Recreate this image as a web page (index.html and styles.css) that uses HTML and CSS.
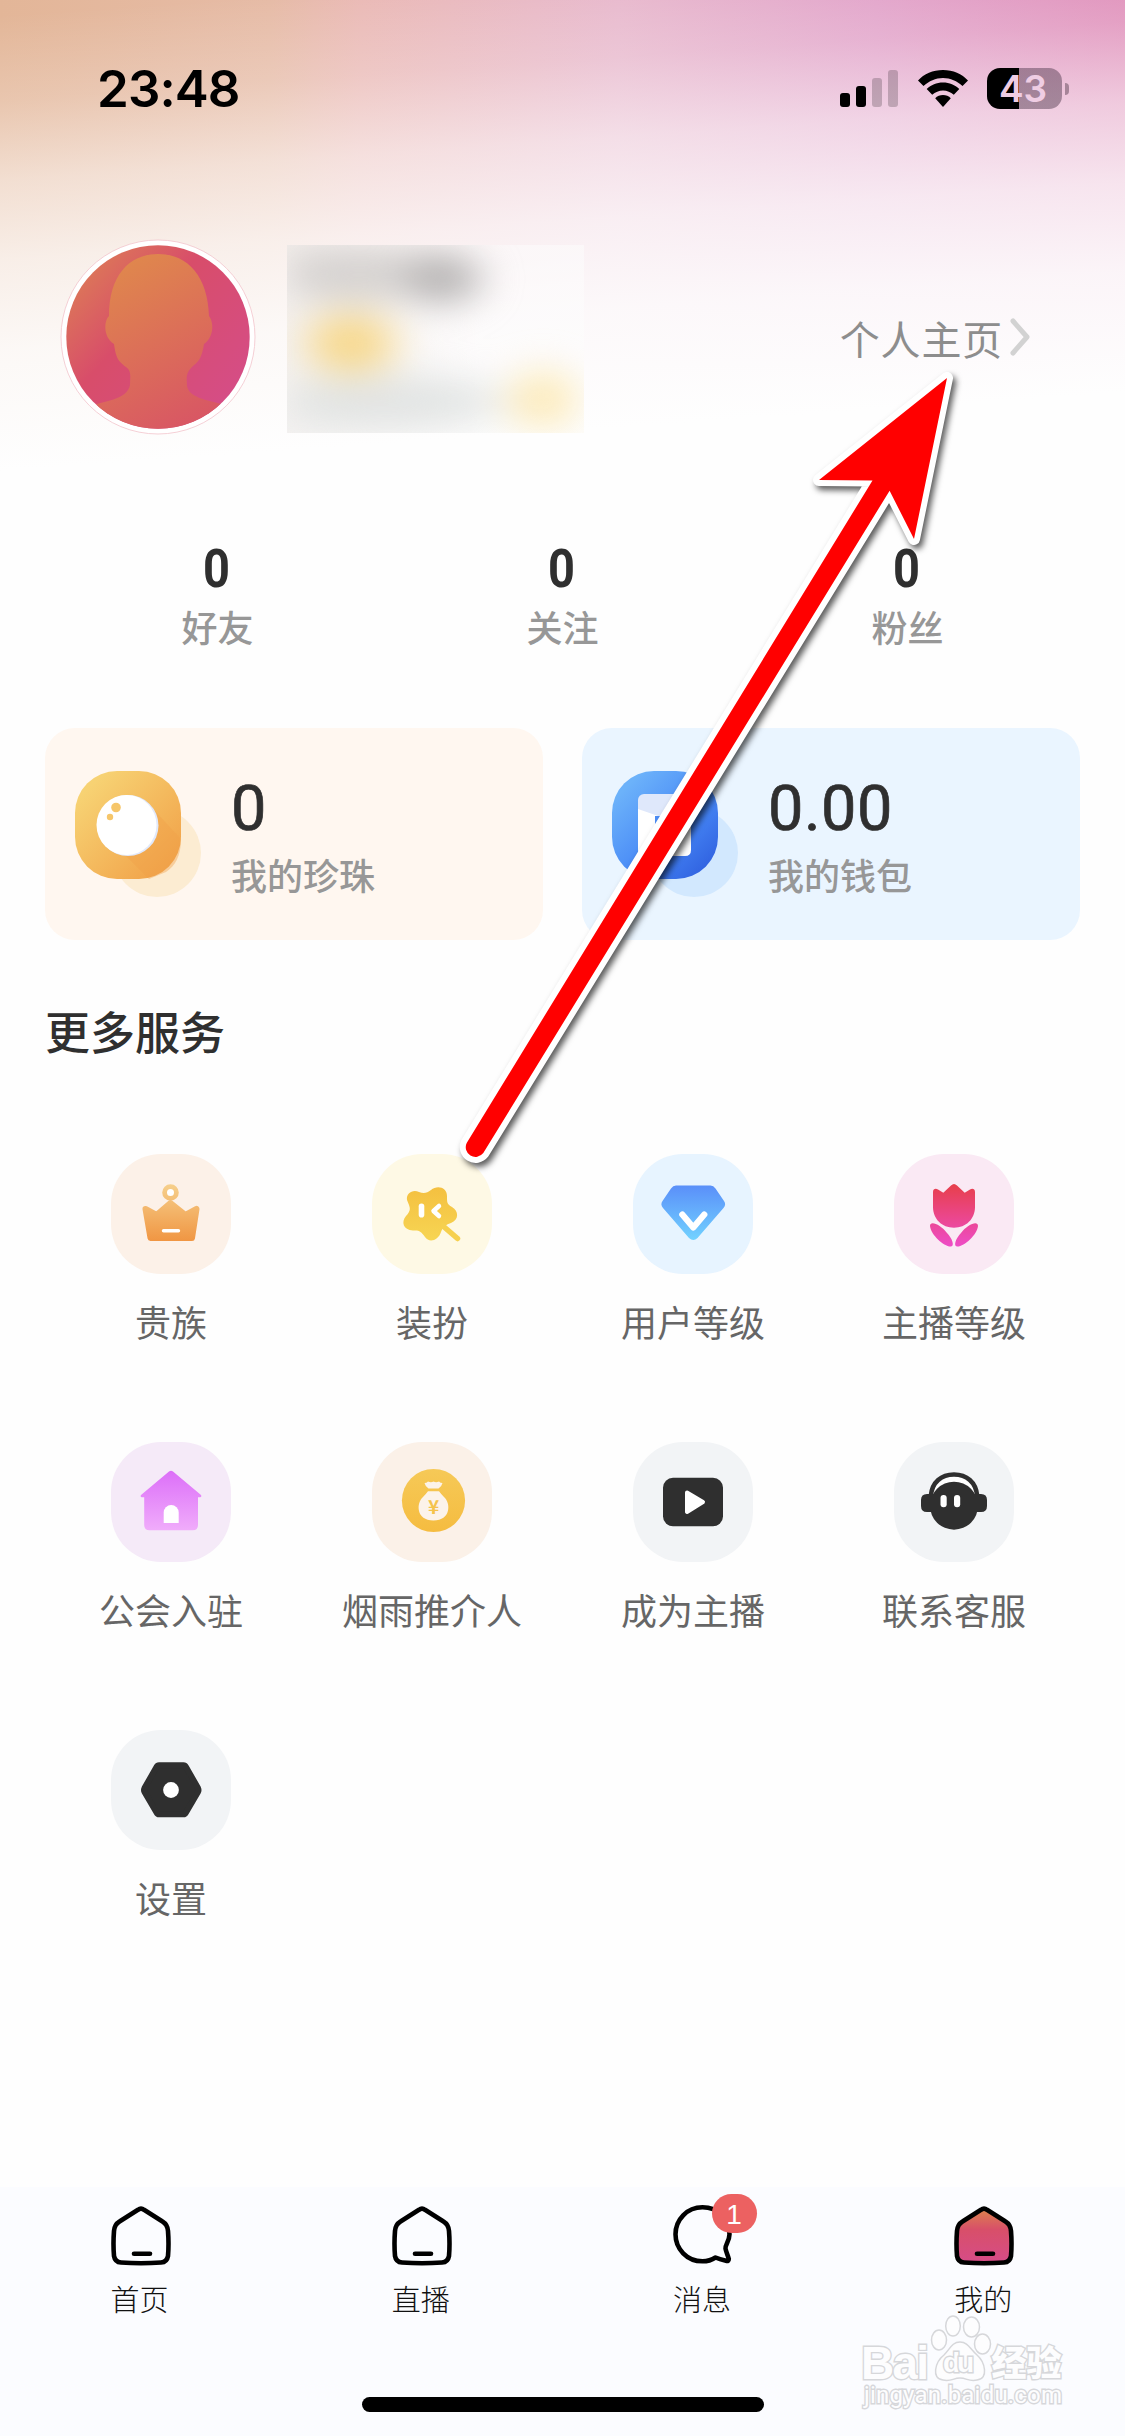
FILE: index.html
```html
<!DOCTYPE html>
<html lang="zh-CN">
<head>
<meta charset="utf-8">
<title>我的</title>
<link rel="stylesheet" href="styles.css">
</head>
<body>
<div class="page">
  <header class="status">
    <span class="time">23:48</span>
    <div class="indicators">
      <svg class="signal" width="58" height="37" viewBox="0 0 58 37">
        <rect x="0" y="23" width="10" height="14" rx="3"/>
        <rect x="16" y="16" width="10" height="21" rx="3"/>
        <rect x="32" y="8" width="10" height="29" rx="3" opacity=".2"/>
        <rect x="48" y="0" width="10" height="37" rx="3" opacity=".2"/>
      </svg>
      <svg class="wifi" width="50" height="37" viewBox="0 0 50 37">
        <path d="M25 0C35 0 44 4 50 10.500L44.500 16C39 11 32.500 8 25 8S11 11 5.500 16L0 10.500C6 4 15 0 25 0Z"/>
        <path d="M25 12.500C31.500 12.500 37 15 41.300 19L35.800 24.800C32.800 22.200 29 20.500 25 20.500S17.200 22.200 14.200 24.800L8.700 19C13 15 18.500 12.500 25 12.500Z"/>
        <path d="M25 25C28 25 30.800 26.200 32.800 28.200L25 37L17.200 28.200C19.200 26.200 22 25 25 25Z"/>
      </svg>
      <div class="battery"><span>43</span></div>
      <i class="nub"></i>
    </div>
  </header>

  <section class="profile">
    <svg class="avatar" width="196" height="196" viewBox="0 0 196 196">
      <defs>
        <linearGradient id="av" x1="0" y1="0.100" x2="0.900" y2="0.900">
          <stop offset="0.080" stop-color="#dc7758"/><stop offset="0.420" stop-color="#d84d6a"/><stop offset="1" stop-color="#d54d88"/>
        </linearGradient>
        <linearGradient id="hd" x1="0.200" y1="0" x2="0.700" y2="1">
          <stop offset="0" stop-color="#e08b4b"/><stop offset="1" stop-color="#d85465"/>
        </linearGradient>
        <clipPath id="ac"><circle cx="98" cy="98" r="91.700"/></clipPath>
      </defs>
      <circle cx="98" cy="98" r="97" fill="#fff" stroke="#f3c4cb" stroke-width=".8"/>
      <circle cx="98" cy="98" r="91.700" fill="url(#av)"/>
      <path clip-path="url(#ac)" fill="url(#hd)" d="M98 15C129 15 148 39 149 77C154 83 154 98 144 105C141 123 137 123 131 129C125 135 127 141 127 147C129 158 145 161 162 165L180 196H16L37 165C52 161 68 158 70 146C70 139 72 132 66 128C58 122 56 119 54 105C44 99 43 83 49 77C49 38 68 15 98 15Z"/>
    </svg>
    <div class="censored"></div>
    <a class="home-link">个人主页
      <svg width="22" height="38" viewBox="0 0 22 38"><path d="M4 3L18 19L4 35" fill="none" stroke="#d2d2d2" stroke-width="5" stroke-linecap="round" stroke-linejoin="round"/></svg>
    </a>
  </section>

  <section class="stats">
    <div class="stat"><b>0</b><span>好友</span></div>
    <div class="stat"><b>0</b><span>关注</span></div>
    <div class="stat"><b>0</b><span>粉丝</span></div>
  </section>

  <section class="cards">
    <div class="card pearl">
      <svg width="128" height="128" viewBox="0 0 128 128">
        <defs><linearGradient id="pg" x1="0.100" y1="0.100" x2="0.900" y2="0.900">
          <stop offset="0.050" stop-color="#f7d273"/><stop offset="1" stop-color="#f1a249"/></linearGradient></defs>
        <circle cx="82" cy="82" r="44" fill="#fcecd2"/>
        <rect width="106" height="108" rx="42" fill="url(#pg)"/>
        <path d="M80 40L106 68C106 85 100 95 91 101L74 108L50 84Z" fill="#f1a149" opacity=".4"/>
        <circle cx="53" cy="54.500" r="30.500" fill="#e1e9fb"/>
        <circle cx="51.500" cy="54" r="30" fill="#fff"/>
        <circle cx="41" cy="36.500" r="4.800" fill="#f6c66a"/>
        <circle cx="35" cy="46" r="3.200" fill="#f6c66a"/>
      </svg>
      <div><b>0</b><span>我的珍珠</span></div>
    </div>
    <div class="card wallet">
      <svg width="128" height="128" viewBox="0 0 128 128">
        <defs><linearGradient id="wg" x1="0.100" y1="0.100" x2="0.900" y2="0.900">
          <stop offset="0.050" stop-color="#6cb2fa"/><stop offset="0.600" stop-color="#4788f6"/><stop offset="1" stop-color="#3163e1"/></linearGradient></defs>
        <circle cx="82" cy="82" r="44" fill="#d2e8fe"/>
        <rect width="106" height="108" rx="42" fill="url(#wg)"/>
        <rect x="26" y="23" width="53" height="40" rx="6" fill="#dfe8fb"/>
        <path d="M26 38L52 47H73Q79 47 79 53V79Q79 85 73 85H32Q26 85 26 79Z" fill="#fff"/>
        <rect x="43" y="45" width="5" height="15" fill="#4c8df6"/>
      </svg>
      <div><b>0.00</b><span>我的钱包</span></div>
    </div>
  </section>

  <h2>更多服务</h2>

  <section class="services">
    <div class="service">
      <svg class="peach" viewBox="0 0 120 120">
        <defs><linearGradient id="cr" gradientUnits="userSpaceOnUse" x1="0" y1="30" x2="0" y2="87"><stop offset="0" stop-color="#f6d08c"/><stop offset="1" stop-color="#f09643"/></linearGradient></defs>
        <circle cx="59.500" cy="38.500" r="5.900" fill="#fff" stroke="url(#cr)" stroke-width="4.800"/>
        <path fill="url(#cr)" stroke="url(#cr)" stroke-width="6" stroke-linejoin="round" d="M34.500 55L45.500 61L59.500 49L74.500 61L85.500 55L81 84H39.500Z"/>
        <path d="M52.500 76.700H67.500" stroke="#fff" stroke-width="3.400" stroke-linecap="round"/>
      </svg><span>贵族</span>
    </div>
    <div class="service">
      <svg class="cream" viewBox="0 0 120 120">
        <defs><linearGradient id="fl" x1="0" y1="0" x2="0" y2="1"><stop offset="0" stop-color="#f4c040"/><stop offset="1" stop-color="#f7d553"/></linearGradient></defs>
        <path fill="url(#fl)" d="M35 46C34 39 41 35 47 38C52 40 55 39 59 36C65 31 75 33 75 42C75 49 75 50 80 53C87 57 87 66 79 69C73 71 71 73 69 78C66 87 57 89 53 83C49 77 47 76 41 76.500C31 76 29 68 34 62C39 57 38 54 37 51Z"/>
        <path d="M71 72L85.500 84.500" stroke="#f6d04e" stroke-width="5.500" stroke-linecap="round"/>
        <rect x="46.700" y="49.500" width="5.600" height="14" rx="2.800" fill="#fff"/>
        <path d="M67 52L61.500 57L67 62" fill="none" stroke="#fff" stroke-width="4.500" stroke-linecap="round" stroke-linejoin="round"/>
      </svg><span>装扮</span>
    </div>
    <div class="service">
      <svg class="sky" viewBox="0 0 120 120">
        <defs><linearGradient id="dm" x1="0" y1="0" x2="0" y2="1"><stop offset="0" stop-color="#5a8ff9"/><stop offset="1" stop-color="#72d2ff"/></linearGradient></defs>
        <path fill="url(#dm)" d="M43 31.500H77.500Q80.500 31.500 82.500 34.500L91 47Q93.500 50.500 90.500 54L64.500 84Q60.300 88 56 84L30 54Q27 50.500 29.500 47L38 34.500Q40 31.500 43 31.500Z"/>
        <path d="M49.300 60.500L60.300 73.500L71.300 60.500" fill="none" stroke="#fff" stroke-width="6.200" stroke-linecap="round" stroke-linejoin="round"/>
      </svg><span>用户等级</span>
    </div>
    <div class="service">
      <svg class="pink" viewBox="0 0 120 120">
        <defs><linearGradient id="tu" gradientUnits="userSpaceOnUse" x1="0" y1="30" x2="0" y2="93"><stop offset="0" stop-color="#e73f4a"/><stop offset="1" stop-color="#ee4dc8"/></linearGradient></defs>
        <path fill="url(#tu)" d="M39 38C39 35 41.500 34 44 35.500L49.300 38.800L57 31.500Q60 28.500 63 31.500L70.700 38.800L76 35.500C78.500 34 81 35 81 38V53C81 65 72 73.700 60 73.700S39 65 39 53Z"/>
        <path fill="url(#tu)" d="M36 72C36 66 47 71 53 79C58 84 61 92 57 92.500C50 93 37 81 36 72ZM84 72C84 66 73 71 67 79C62 84 59 92 63 92.500C70 93 83 81 84 72Z"/>
      </svg><span>主播等级</span>
    </div>
    <div class="service">
      <svg class="lilac" viewBox="0 0 120 120">
        <defs><linearGradient id="ho" x1="0" y1="0" x2="0" y2="1"><stop offset="0" stop-color="#dc6ff8"/><stop offset="1" stop-color="#f0acfb"/></linearGradient></defs>
        <path fill="url(#ho)" d="M58 29.500Q60 28 62 29.500L90 53Q91 55 89 55.300H87V83Q87 88.300 81.700 88.300H38.500Q33.200 88.300 33.200 83V55.300H31Q29 55 30 53Z"/>
        <path d="M52.700 81V70.500A7.500 7.500 0 0 1 67.700 70.500V81Z" fill="#fff"/>
      </svg><span>公会入驻</span>
    </div>
    <div class="service">
      <svg class="sand" viewBox="0 0 120 120">
        <defs><linearGradient id="mo" x1="0" y1="0" x2="0" y2="1"><stop offset="0" stop-color="#f6c957"/><stop offset="1" stop-color="#f5bc40"/></linearGradient></defs>
        <circle cx="61.500" cy="58.500" r="31.600" fill="url(#mo)"/>
        <path fill="#fcf3ea" d="M52.500 41Q54.500 41 56 39.500Q59 41 61.500 39.500Q64 41 67 39.500Q68.500 41 70.500 41Q69.500 45 66.500 46.500H56.500Q53.500 45 52.500 41ZM56 49.300H67Q69 52 72 55C79 61 79 78.500 61.500 78.500S44 61 51 55Q54 52 56 49.300Z"/>
        <text x="61.500" y="71.500" text-anchor="middle" class="yen">¥</text>
      </svg><span>烟雨推介人</span>
    </div>
    <div class="service">
      <svg class="grey" viewBox="0 0 120 120">
        <rect x="30" y="35.700" width="60" height="48.600" rx="10" fill="#2f2f2f"/>
        <path d="M54 50.500L70 60L54 70Z" fill="#fff" stroke="#fff" stroke-width="4" stroke-linejoin="round"/>
      </svg><span>成为主播</span>
    </div>
    <div class="service">
      <svg class="grey" viewBox="0 0 120 120">
        <path d="M36 56C37 41 47 33 60 33S83 41 84 56Z" fill="#fff"/>
        <circle cx="60" cy="63.700" r="24" fill="#2f2f2f"/>
        <path d="M36.800 54C38 40 47.500 32.500 60 32.500S82 40 83.200 54" fill="none" stroke="#2f2f2f" stroke-width="4.600"/>
        <path fill="#2f2f2f" d="M33 52H40V70H33Q27 70 27 64V58Q27 52 33 52ZM80 52H87Q93 52 93 58V64Q93 70 87 70H80Z"/>
        <rect x="46.500" y="53" width="6.200" height="12.300" rx="3" fill="#fff"/><rect x="60" y="53" width="6.200" height="12.300" rx="3" fill="#fff"/>
      </svg><span>联系客服</span>
    </div>
    <div class="service">
      <svg class="grey" viewBox="0 0 120 120">
        <path d="M48 35.300H72.500Q74 35.300 75 37L87 58Q88 60 87 62L75 82.500Q74 84.300 72.500 84.300H48Q46.500 84.300 45.500 82.500L33.500 62Q32.500 60 33.500 58L45.500 37Q46.500 35.300 48 35.300Z" fill="#2f2f2f" stroke="#2f2f2f" stroke-width="6" stroke-linejoin="round"/>
        <circle cx="60" cy="60" r="7.900" fill="#fff"/>
      </svg><span>设置</span>
    </div>
  </section>

  <nav class="tabs">
    <div class="tab">
      <svg width="60" height="60" viewBox="0 0 60 60"><path class="line" d="M27 3.800Q30 1.500 33 3.800L51.500 15.500Q56.500 18.500 57 25Q58 38 57 50Q56 56 50 56.500Q30 58 10 56.500Q4 56 3 50Q2 38 3 25Q3.500 18.500 8.500 15.500Z"/><path class="line" d="M23 47.700H39"/></svg>
      <span>首页</span>
    </div>
    <div class="tab">
      <svg width="60" height="60" viewBox="0 0 60 60"><path class="line" d="M27 3.800Q30 1.500 33 3.800L51.500 15.500Q56.500 18.500 57 25Q58 38 57 50Q56 56 50 56.500Q30 58 10 56.500Q4 56 3 50Q2 38 3 25Q3.500 18.500 8.500 15.500Z"/><path class="line" d="M23 47.700H39"/></svg>
      <span>直播</span>
    </div>
    <div class="tab">
      <svg class="bubble" width="60" height="60" viewBox="0 0 60 60"><path class="line" d="M42.500 51.500C38 54.500 34 55.300 29.500 55.300C14 55.300 2.500 43 2.500 28.300S14 1.300 29.500 1.300S56.500 13 56.500 28.300C56.500 35 52 39 52.500 42.500C53 46 55 49.500 55.800 53Q55.800 55.500 53 54.800C49 53.800 46 53 42.500 51.500Z"/></svg>
      <em class="badge">1</em>
      <span>消息</span>
    </div>
    <div class="tab">
      <svg width="60" height="60" viewBox="0 0 60 60">
        <defs><linearGradient id="me" x1="0" y1="0" x2="0" y2="1"><stop offset="0.050" stop-color="#dc7d50"/><stop offset="0.380" stop-color="#d84f69"/><stop offset="1" stop-color="#d64c88"/></linearGradient></defs>
        <path class="line filled" d="M27 3.800Q30 1.500 33 3.800L51.500 15.500Q56.500 18.500 57 25Q58 38 57 50Q56 56 50 56.500Q30 58 10 56.500Q4 56 3 50Q2 38 3 25Q3.500 18.500 8.500 15.500Z"/><path class="line" d="M23 47.700H39"/></svg>
      <span>我的</span>
    </div>
  </nav>
  <footer class="home-bar"></footer>

  <svg class="watermark" width="215" height="105" viewBox="0 0 215 105">
    <g class="mark">
      <ellipse cx="98" cy="21" rx="7.300" ry="10"/><ellipse cx="116.500" cy="22" rx="8" ry="10"/>
      <ellipse cx="84" cy="35" rx="7.500" ry="10"/><ellipse cx="127.500" cy="39" rx="8" ry="10"/>
      <path d="M105 37C113 37 115 44 122 50C130 57 134 74 122 75C114 77 112 73 105 73S96 77 88 75C76 74 80 57 89 50C95 44 97 37 105 37Z"/>
      <text x="6" y="74" class="bai" textLength="68">Bai</text>
      <text x="88" y="67" class="du" textLength="31">du</text>
      <text x="136.500" y="71" class="cn">经验</text>
      <text x="9" y="98" class="url" textLength="198">jingyan.baidu.com</text>
    </g>
  </svg>

  <svg class="arrow" width="1125" height="1250" viewBox="0 0 1125 1250">
    <path d="M947 378L819 480L872.500 480.500L466.700 1142.900A9.800 9.800 0 0 0 483.300 1153.100L889.600 490.700L914 539Z"/>
  </svg>
</div>
</body>
</html>
```
FILE: styles.css
```css
* { box-sizing: border-box; }
body {
  margin: 0;
  background: #fefefe;
  font-family: "Noto Sans CJK SC", sans-serif;
}
svg { display: block; flex: none; }
.page {
  position: relative;
  display: flex;
  flex-direction: column;
  width: 1125px;
  height: 2436px;
  overflow: hidden;
  background:
    linear-gradient(176deg, rgba(254,254,254,0) 15px, rgba(254,254,254,.22) 100px, rgba(254,254,254,.56) 180px, rgba(254,254,254,.78) 260px, rgba(254,254,254,.92) 350px, #fefefe 470px) 0 0 / 1125px 560px no-repeat,
    linear-gradient(90deg, #e3b698 0, #e6bba6 24%, #eab9b5 32%, #e7b6cb 55%, #e09dc6 78%, #dd86b4 100%) 0 0 / 1125px 560px no-repeat,
    #fefefe;
}
.status {
  display: flex;
  justify-content: space-between;
  height: 177px;
  padding: 68px 56px 0 97px;
}
.time {
  font: 600 51px/42px Inter, sans-serif;
  letter-spacing: -.9px;
  color: #000;
}
.indicators { display: flex; height: 41px; align-items: center; }
.wifi { margin: 0 19.500px; }
.battery {
  width: 75px;
  height: 41px;
  border-radius: 13px;
  background: linear-gradient(90deg, #000 32px, rgba(60,40,60,.42) 32px);
  font: 600 37px/42px Inter, sans-serif;
  color: #efcde3;
  text-align: center;
}
.battery span { margin-right: 3px; }
.nub {
  width: 4px;
  height: 12px;
  margin-left: 3px;
  border-radius: 0 4px 4px 0;
  background: #a68498;
}
.profile {
  display: flex;
  height: 360px;
  padding: 62px 94px 0 59.500px;
}
.censored {
  width: 297px;
  height: 188px;
  margin: 6px 0 0 31.500px;
  overflow: hidden;
  background: linear-gradient(90deg, rgba(240,237,235,.65), rgba(253,253,253,.5) 65%);
}
.censored::before {
  content: "";
  display: block;
  width: 100%;
  height: 100%;
  background:
    radial-gradient(ellipse 56px 34px at 156px 34px, rgba(170,168,168,.85) 30%, transparent 100%),
    radial-gradient(ellipse 125px 40px at 72px 28px, rgba(205,202,200,.8) 40%, transparent 100%),
    radial-gradient(ellipse 64px 42px at 64px 98px, rgba(247,213,129,.95) 30%, transparent 100%),
    radial-gradient(ellipse 52px 42px at 256px 155px, rgba(252,233,180,.9) 30%, transparent 100%),
    radial-gradient(ellipse 160px 36px at 100px 157px, rgba(222,225,224,.85) 50%, transparent 100%);
  filter: blur(16px);
}
.home-link {
  display: flex;
  align-items: center;
  height: 60px;
  margin: 69px 0 0 auto;
  font-size: 40px;
  line-height: 54px;
  letter-spacing: .8px;
  color: #8d8d8d;
}
.home-link svg { margin: 0 0 2px 6px; }
.stats {
  display: flex;
  height: 191px;
  padding: 0 45px;
}
.stat {
  display: flex;
  flex: 1;
  flex-direction: column;
  align-items: center;
}
.stat b {
  margin-right: 3px;
  font: 700 54px/64px Roboto, sans-serif;
  color: #2f2f2f;
  transform: scaleX(.87);
}
.stat span {
  margin-top: -1px;
  font-size: 36px;
  font-weight: 500;
  line-height: 52px;
  color: #979797;
}
.cards { display: flex; gap: 39px; padding: 0 45px; }
.card {
  display: flex;
  flex: 1;
  gap: 28px;
  height: 212px;
  padding: 43px 0 0 30px;
  border-radius: 30px;
}
.card.pearl { background: #fff7f0; }
.card.wallet { background: #eaf5ff; }
.card div { display: flex; flex-direction: column; }
.card b {
  font: 400 63px/76px Roboto, sans-serif;
  letter-spacing: .500px;
  -webkit-text-stroke: .7px #2f2f2f;
  color: #2f2f2f;
}
.card span {
  margin-top: 1px;
  font-size: 36px;
  font-weight: 500;
  line-height: 52px;
  color: #979797;
}
h2 {
  margin: 0;
  padding: 58px 45px 0;
  height: 214px;
  font-size: 45px;
  font-weight: 500;
  line-height: 66px;
  color: #2f2f2f;
}
.services {
  display: grid;
  grid-template-columns: repeat(4, 261px);
  grid-auto-rows: 288px;
  height: 1033px;
  padding: 0 40.500px;
}
.service { display: flex; flex-direction: column; align-items: center; }
.service svg { width: 120px; height: 120px; border-radius: 50px; }
.service span {
  margin-top: 21px;
  font-size: 36px;
  font-weight: 400;
  line-height: 52px;
  color: #666;
}
.peach { background: #fcf1e8; }
.cream { background: #fef9e5; }
.sky { background: #e7f4ff; }
.pink { background: #fae9f4; }
.lilac { background: #f5eaf8; }
.sand { background: #fbf1e8; }
.grey { background: #f2f4f6; }
.yen { font: 700 19px "Noto Sans CJK SC", sans-serif; fill: #f5c34c; }
.tabs {
  display: flex;
  flex: none;
  height: 210px;
  background: #fbfcff;
}
.tab {
  position: relative;
  display: flex;
  flex: 1;
  flex-direction: column;
  align-items: center;
  padding-top: 19px;
}
.tab span {
  margin: 11px 2px 0 0;
  font-size: 29px;
  font-weight: 300;
  line-height: 42px;
  color: #111;
}
.bubble { margin-right: 1px; overflow: visible; }
.line {
  fill: none;
  stroke: #000;
  stroke-width: 4.600px;
  stroke-linecap: round;
  stroke-linejoin: round;
}
.filled { fill: url(#me); }
.badge {
  position: absolute;
  left: 149px;
  top: 7px;
  width: 45px;
  height: 39px;
  border-radius: 19.500px;
  background: #ec6161;
  font: 400 28px/41px "Liberation Sans", sans-serif;
  color: #fff;
  text-align: center;
}
.home-bar {
  display: flex;
  flex: none;
  height: 39px;
  background: #fbfcff;
}
.home-bar::before {
  content: "";
  width: 402px;
  height: 15px;
  margin: 0 auto;
  border-radius: 8px;
  background: #000;
}
.watermark { position: absolute; left: 855px; top: 2305px; }
.mark { fill: #fdfdfe; stroke: #d6d7da; stroke-width: 1.500px; }
.mark text { paint-order: stroke; stroke-width: 2.800px; }
.bai { font: 700 46px "Liberation Sans", sans-serif; }
.du { font: 700 28px "Liberation Sans", sans-serif; }
.cn { font: 900 35px "Noto Sans CJK SC", sans-serif; }
.url { font: 400 24px Roboto, sans-serif; }
.arrow {
  position: absolute;
  left: 0;
  top: 0;
  fill: #f00;
  stroke: #fff;
  stroke-width: 12px;
  stroke-linejoin: round;
  paint-order: stroke;
  filter: drop-shadow(3px 4px 3px rgba(0,0,0,.65));
}
```
